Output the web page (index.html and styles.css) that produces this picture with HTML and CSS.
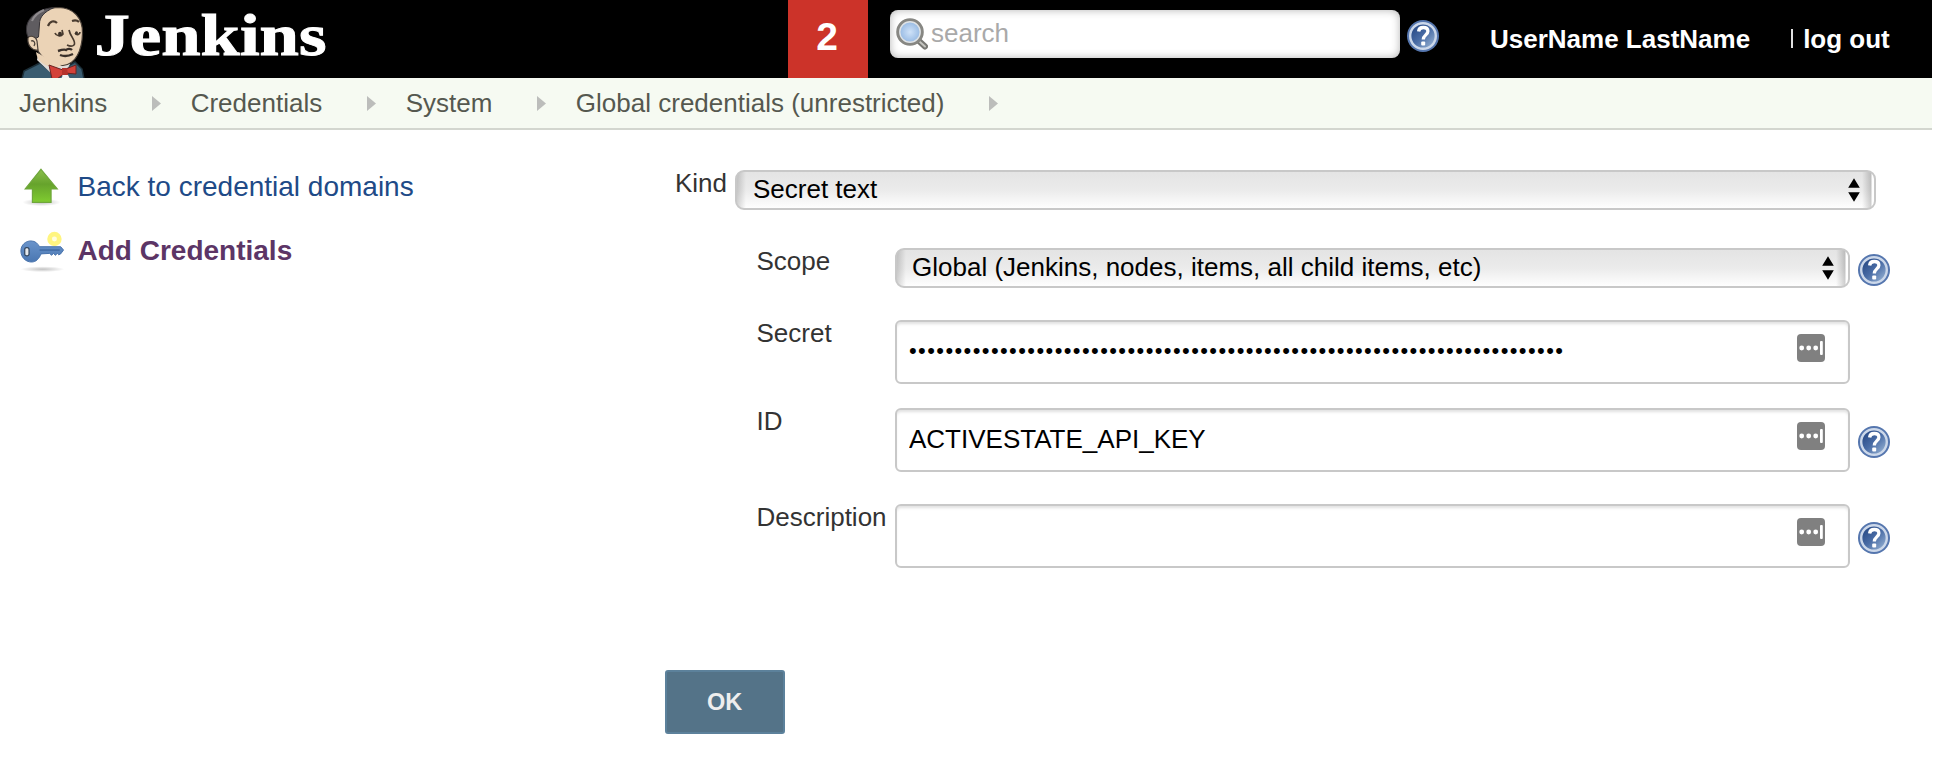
FILE: index.html
```html
<!DOCTYPE html>
<html lang="en">
<head>
<meta charset="utf-8">
<title>Add Credentials [Jenkins]</title>
<link rel="stylesheet" href="styles.css">
</head>
<body>
<svg class="defs" width="0" height="0" aria-hidden="true">
  <defs>
    <linearGradient id="helpFill" x1="0" y1="0" x2="1" y2="1"><stop offset=".15" stop-color="#2a4c88"/><stop offset=".5" stop-color="#4a6da6"/><stop offset="1" stop-color="#a5bfdc"/></linearGradient>
    <linearGradient id="arrowFill" x1="0" y1="0" x2="0" y2="1"><stop offset="0" stop-color="#8cc04c"/><stop offset=".45" stop-color="#66a32c"/><stop offset="1" stop-color="#80cc30"/></linearGradient>
    <linearGradient id="keyFill" x1="0" y1="0" x2="0" y2="1"><stop offset="0" stop-color="#6a94cb"/><stop offset="1" stop-color="#4a77b2"/></linearGradient>
    <radialGradient id="lensFill"><stop offset="0" stop-color="#cfe2f8"/><stop offset="1" stop-color="#8fb4e0"/></radialGradient>
    <radialGradient id="shade"><stop offset="0" stop-color="#000" stop-opacity=".24"/><stop offset="1" stop-color="#000" stop-opacity="0"/></radialGradient>
    <symbol id="help" viewBox="0 0 32 32">
      <circle cx="16" cy="16" r="16" fill="#5576ae"/>
      <circle cx="16" cy="16" r="12.800" fill="url(#helpFill)" stroke="#ccd8ea" stroke-width="2.400"/>
      <path d="M11.600 11.500c.3-3 2.300-4 4.600-4 2.800 0 4.700 1.400 4.700 3.800 0 3.600-4.600 3.700-4.600 8.200" fill="none" stroke="#fff" stroke-width="3.300"/>
      <rect x="14.200" y="21.600" width="4" height="4" rx="1" fill="#fff"/>
    </symbol>
    <symbol id="fill" viewBox="0 0 28 28">
      <rect width="28" height="28" rx="4" fill="#808080"/>
      <circle cx="4.700" cy="14" r="2.400" fill="#fff"/><circle cx="11.700" cy="14" r="2.400" fill="#fff"/><circle cx="18.700" cy="14" r="2.400" fill="#fff"/>
      <rect x="23" y="7" width="2.800" height="14" rx="1" fill="#fff"/>
    </symbol>
    <symbol id="updown" viewBox="0 0 12 24"><path d="M6 .3 11.800 9.700H.2zM6 23.700.2 14.300h11.600z" fill="#000"/></symbol>
    <symbol id="crumb" viewBox="0 0 9 15"><path d="M0 0 9 7.500 0 15z" fill="#bcbdbb"/></symbol>
  </defs>
</svg>

<header class="header">
  <a class="logo" href="#">
    <svg class="butler" viewBox="0 0 68 78">
      <path d="M2 79 4 71 20 63 34 74 55 62 62 69 64 79z" fill="#3a5c70" stroke="#1c2f39" stroke-width="1.500"/>
      <path d="M17 60 18 54 42 60 50 64 44 76H34z" fill="#e0dcd8"/>
      <path d="M15 44C8 22 18 8 38 7.500c16 0 25 11 24.500 26C62 50 56 64.500 43 65.500 30 66 19 57 15 44z" fill="#ebd3b6" stroke="#4a4038" stroke-width="1.200"/>
      <path d="M16 52c1 8 6 12 12 14l8 2 6-3-14-6z" fill="#ebd3b6"/>
      <path d="M8 37C2 22 14 9 34 7.500 24 12 19.500 17 19.500 24L18.500 37l-4 2c-1-3-4-3-6.500-2z" fill="#5f5c60" stroke="#353236"/>
      <path d="M12 21c2-5 7-9 12-11" fill="none" stroke="#8f8b8e" stroke-width="2"/>
      <path d="M8 38c2-3 8-2 9 3l1 9c-5 1-11-4-10-12z" fill="#ebd3b6" stroke="#4a4038" stroke-width="1.200"/>
      <path d="M11 41c3-1 5 2 3 5" fill="none" stroke="#4a4038" stroke-width="1.300"/>
      <path d="M28 26c2-5 6-6 9-3M52 21c3-1 5-1 7 1" fill="none" stroke="#4a3c30" stroke-width="2.200"/>
      <path d="M35 33c1 3 6 4 8 1l-1-4M55 33c2 3 5 1 5-1" fill="none" stroke="#4a3c30" stroke-width="1.700"/>
      <ellipse cx="40" cy="34" rx="2" ry="2.200" fill="#3d332b"/><ellipse cx="56.500" cy="33" rx="1.500" ry="1.800" fill="#3d332b"/>
      <path d="M49 30c1 6 8 12 5 15-2 2-5 1-7 0" fill="none" stroke="#4a3c30" stroke-width="1.700"/>
      <path d="M38 51c3-1 6-2 8-1 2-2 5-1 6 0M40 55c5 2 9 1 13-1" fill="none" stroke="#3a302a" stroke-width="2.400"/>
      <path d="M29 65 43 70 56 65 56 74 45 73 37 79H32z" fill="#d34139" stroke="#6a2422"/>
      <path d="M42 68h5l1 7h-6z" fill="#b5322d"/><path d="M41 79l2-4h5l2 4z" fill="#f3f3f3"/>
    </svg>
    <svg class="wordmark" width="236" height="78"><text x="-.5" y="54.700" textLength="232" lengthAdjust="spacingAndGlyphs">Jenkins</text></svg>
  </a>
  <span class="alerts">2</span>
  <label class="search">
    <svg class="lens" viewBox="0 0 32 32"><path d="M23 23l6 5.500" stroke="#777773" stroke-width="6" stroke-linecap="round"/><path d="M24 24l5 4.500" stroke="#c5c5c0" stroke-width="2" stroke-linecap="round"/><circle cx="14" cy="14" r="12" fill="url(#lensFill)" stroke="#878783" stroke-width="3.600"/><circle cx="14" cy="14" r="10.200" fill="none" stroke="#dfe3e6" stroke-width="1.400"/></svg>
    <input class="search-input" type="text" placeholder="search">
  </label>
  <svg class="help help-top"><use href="#help"/></svg>
  <a class="user" href="#">UserName LastName</a>
  <span class="divider"></span>
  <a class="logout" href="#">log out</a>
</header>

<nav class="crumbs">
  <a href="#">Jenkins</a><svg class="crumb"><use href="#crumb"/></svg>
  <a href="#">Credentials</a><svg class="crumb"><use href="#crumb"/></svg>
  <a href="#">System</a><svg class="crumb"><use href="#crumb"/></svg>
  <a href="#">Global credentials (unrestricted)</a><svg class="crumb"><use href="#crumb"/></svg>
</nav>

<main class="page">
  <aside class="side">
    <a class="task" href="#">
      <svg class="task-icon" viewBox="0 0 48 48"><ellipse cx="24" cy="40" rx="20" ry="4" fill="url(#shade)"/><path d="M23.500 5.500 40.500 26H34v14H14.500V26H7z" fill="url(#arrowFill)" stroke="#6fa63c" stroke-width="1.200"/></svg>
      <span>Back to credential domains</span>
    </a>
    <a class="task current" href="#">
      <svg class="task-icon" viewBox="0 0 48 48"><ellipse cx="25" cy="43" rx="23" ry="3" fill="url(#shade)"/><circle cx="37.500" cy="11.500" r="7.500" fill="#fff36a" opacity=".85"/><circle cx="37.500" cy="11.500" r="2.600" fill="#fffde0"/><path d="M13 13.500c5 0 7 3 9 6h22l3 3.500-3 4-2 1-1.500-1.500-2 2-2-2-2 2-2-2-9 .5c-2 5-5 8.500-10 8.500-6 0-11-5-11-11.500s5-10.500 10.500-10.500z" fill="url(#keyFill)" stroke="#4671aa" stroke-width="1"/><rect x="6.500" y="20.500" width="4.500" height="8.500" rx="2" fill="#e5e9ed" stroke="#34475f" stroke-width="1.300"/><path d="M22 23h21" stroke="#3a649e" stroke-width="1.300"/></svg>
      <span>Add Credentials</span>
    </a>
  </aside>

  <form class="form">
    <div class="kind">
      <label class="label">Kind</label>
      <div class="select"><span>Secret text</span><svg class="updown"><use href="#updown"/></svg></div>
    </div>
    <div class="fields">
      <div class="row row-scope">
        <label class="label">Scope</label>
        <div class="select"><span>Global (Jenkins, nodes, items, all child items, etc)</span><svg class="updown"><use href="#updown"/></svg></div>
        <svg class="help"><use href="#help"/></svg>
      </div>
      <div class="row row-secret">
        <label class="label">Secret</label>
        <div class="box"><input class="input secret" type="password" value="012345678901234567890123456789012345678901234567890123456789012345678901"><svg class="fill"><use href="#fill"/></svg></div>
      </div>
      <div class="row row-id">
        <label class="label">ID</label>
        <div class="box"><input class="input" type="text" value="ACTIVESTATE_API_KEY"><svg class="fill"><use href="#fill"/></svg></div>
        <svg class="help"><use href="#help"/></svg>
      </div>
      <div class="row">
        <label class="label">Description</label>
        <div class="box"><input class="input" type="text"><svg class="fill"><use href="#fill"/></svg></div>
        <svg class="help"><use href="#help"/></svg>
      </div>
    </div>
    <button class="ok" type="button">OK</button>
  </form>
</main>
</body>
</html>
```
FILE: styles.css
```css
* { box-sizing: border-box; }
body { margin: 0; background: #fff; color: #333; font: 26px/30px "Liberation Sans", Arial, sans-serif; }
a { color: inherit; text-decoration: none; }
svg { display: block; flex: none; }
.defs { position: absolute; }
input { font: inherit; color: #000; border: 0; outline: 0; background: none; padding: 0; margin: 0; }

.header { display: flex; width: 1932px; height: 78px; background: #000; color: #fff; font-weight: bold; }
.logo { display: flex; width: 788px; padding-left: 20px; }
.butler { width: 68px; height: 78px; margin-right: 7px; }
.wordmark text { font: bold 60px "Liberation Serif", "Times New Roman", serif; fill: #fff; stroke: #fff; stroke-width: 1px; }
.alerts { width: 80px; padding-right: 2px; background: #cc3329; font-size: 39px; line-height: 74px; text-align: center; }
.search { display: flex; width: 510px; height: 48px; margin: 10px 0 0 22px; padding: 8px 6px; border-radius: 8px; background: #fff; box-shadow: inset 0 0 9px rgba(0, 0, 0, .3); }
.lens { width: 32px; height: 32px; }
.search-input { width: 440px; height: 30px; margin: 0 0 0 3px; font-weight: normal; }
.search-input::placeholder { color: #a9a9a9; opacity: 1; }
.help { width: 32px; height: 32px; }
.help-top { margin: 20px 0 0 7px; }
.user { margin: 24px 0 0 51px; white-space: nowrap; }
.divider { width: 2px; height: 19px; margin: 29px 0 0 41px; background: #e0e0e0; }
.logout { margin: 24px 0 0 10px; white-space: nowrap; }

.crumbs { display: flex; align-items: center; width: 1932px; height: 52px; padding: 0 0 1px 19px; border-bottom: 2px solid #d3d6cf; background: #f6faf2; color: #55584f; white-space: nowrap; }
.crumb { width: 9px; height: 15px; margin: 2px 30px 0 44.500px; }

.page { display: flex; }
.side { width: 665px; padding: 34px 0 0 18px; }
.task { display: flex; align-items: center; height: 46px; margin-bottom: 18px; gap: 12.500px; color: #204a87; font-size: 28px; }
.task-icon { width: 47px; height: 46px; }
.current { color: #5c3566; font-weight: bold; }

.form { width: 1229px; padding-top: 40px; }
.kind { display: flex; padding-left: 10px; }
.kind .label { width: 60px; margin-top: -2px; }
.kind .select { width: 1141px; }
.label { display: block; color: #333; white-space: nowrap; }
.select { display: flex; justify-content: space-between; align-items: center; height: 40px; padding: 0 14px 2px 16px; border: 2px solid #c8c8c8; border-radius: 9px; color: #000; background: linear-gradient(90deg, rgba(0,0,0,.16), rgba(0,0,0,0) 9px), linear-gradient(270deg, #fff 2px, rgba(0,0,0,.18) 3px, rgba(0,0,0,0) 12px), linear-gradient(#e4e4e4, #ebebeb 50%, #fefefe); }
.row .select { padding-left: 15px; }
.updown { width: 12px; height: 24px; margin-top: 2px; }

.fields { padding: 38px 0 0 92px; }
.row { display: grid; grid-template-columns: 138px 955px 32px; column-gap: 0; height: 64px; }
.row .help { margin: 18px 0 0 8px; }
.row-scope { height: 40px; margin-bottom: 32px; }
.row-scope .help { margin-top: 6px; }
.row-secret { margin-bottom: 24px; }
.row-id { margin-bottom: 32px; }
.row .label { margin: -2px 0 0 -.5px; }
.box { display: flex; justify-content: space-between; height: 64px; padding: 12px 23px 0 12px; border: 2px solid #c8c8c8; border-radius: 6px; background: #fff; box-shadow: inset 0 3px 3px -1px rgba(0, 0, 0, .12); }
.input { width: 860px; height: 30px; margin-top: 2px; }
.secret { font-size: 22px; letter-spacing: 1.400px; margin-top: 2px; }
.fill { width: 28px; height: 28px; }
.ok { display: block; width: 120px; height: 64px; margin-top: 102px; padding: 0 1px 0 0; border: 2px solid #5c819b; border-radius: 3px; background: #547388; color: #eee; font: bold 23.500px "Liberation Sans", Arial, sans-serif; }
```
